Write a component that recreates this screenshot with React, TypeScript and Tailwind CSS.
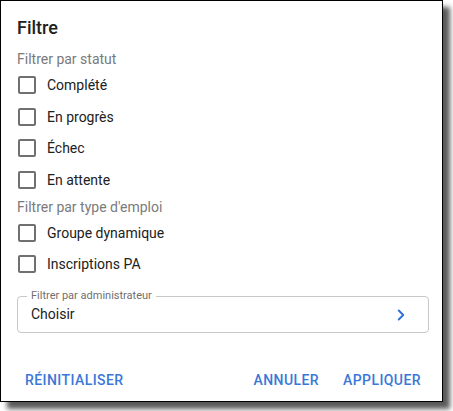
import { ChevronRight } from "lucide-react";

const statusOptions = ["Complété", "En progrès", "Échec", "En attente"];
const jobOptions = ["Groupe dynamique", "Inscriptions PA"];

function CheckRow({ label }: { label: string }) {
  return (
    <label className="flex h-[31.7px] items-center gap-[11px] pl-px">
      <span className="h-[18px] w-[18px] rounded-[2px] border-2 border-[#707070] bg-white" />
      <span className="text-[14px] leading-5 text-[#212121]">{label}</span>
    </label>
  );
}

function SectionLabel({ children }: { children: string }) {
  return <div className="text-[14px] leading-5 text-[#7a7a7a]">{children}</div>;
}

export default function App() {
  return (
    <div className="h-[411px] w-[453px] bg-white" style={{ fontFamily: "Roboto, 'Liberation Sans', sans-serif" }}>
      <div className="flex h-[402px] w-[443px] flex-col border border-black bg-white shadow-[7px_7px_5px_rgba(0,0,0,0.65)]">
        <div className="pl-4 pr-[13px] pt-[15px]">
          <h2 className="text-[18px] font-medium leading-6 text-[#212121]">Filtre</h2>

          <div className="mt-[9px]">
            <SectionLabel>Filtrer par statut</SectionLabel>
            {statusOptions.map((o) => (
              <CheckRow key={o} label={o} />
            ))}
          </div>

          <div className="mt-px">
            <SectionLabel>Filtrer par type d'emploi</SectionLabel>
            {jobOptions.map((o) => (
              <CheckRow key={o} label={o} />
            ))}
          </div>

          {/* outlined select */}
          <div className="relative mt-[16px] flex h-[37px] items-center justify-between rounded-[4px] border border-[#c8c8c8] pl-[13px] pr-[18px]">
            <span className="absolute -top-[8px] left-[9px] bg-white px-[4px] text-[11px] leading-[14px] text-[#6f6f6f]">
              Filtrer par administrateur
            </span>
            <span className="text-[14px] text-[#212121]">Choisir</span>
            <ChevronRight size={18} strokeWidth={2.5} className="text-[#2f6fd6]" />
          </div>
        </div>

        <div className="mt-auto flex items-center justify-between pb-[11px] pl-[24px] pr-[21px]">
          <button className="text-[14px] font-medium leading-5 tracking-[0.03em] text-[#3a78d8]">RÉINITIALISER</button>
          <div className="flex gap-[24px]">
            <button className="text-[14px] font-medium leading-5 tracking-[0.03em] text-[#3a78d8]">ANNULER</button>
            <button className="text-[14px] font-medium leading-5 tracking-[0.03em] text-[#3a78d8]">APPLIQUER</button>
          </div>
        </div>
      </div>
    </div>
  );
}
